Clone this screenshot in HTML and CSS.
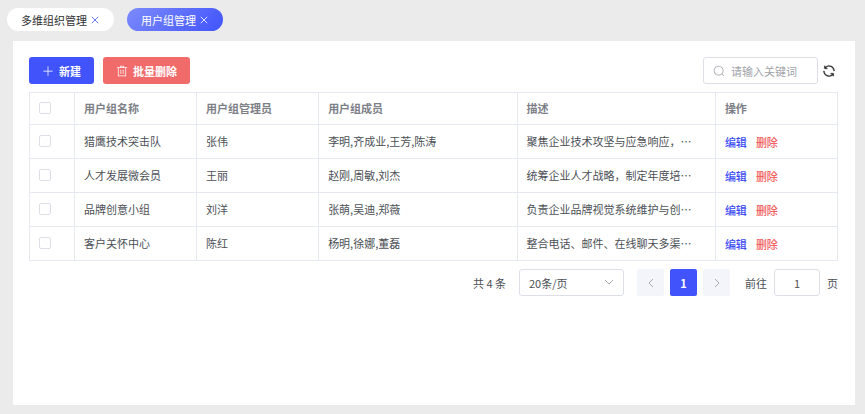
FILE: index.html
```html
<!DOCTYPE html>
<html lang="zh-CN">
<head>
    <meta charset="UTF-8">
    <meta name="viewport" content="width=device-width, initial-scale=1.0">
    <title>用户组管理</title>
    <link rel="stylesheet" href="styles.css">
</head>
<body>
    <!-- Page tabs -->
    <nav class="tabs">
        <div class="tab">
            <a href="#">多维组织管理</a>
            <button type="button" class="tab-close" aria-label="关闭">
                <svg viewBox="0 0 10 10"><path d="M1 1l8 8M9 1l-8 8"/></svg>
            </button>
        </div>
        <div class="tab active">
            <a href="#">用户组管理</a>
            <button type="button" class="tab-close" aria-label="关闭">
                <svg viewBox="0 0 10 10"><path d="M1 1l8 8M9 1l-8 8"/></svg>
            </button>
        </div>
    </nav>

    <main class="panel">
        <!-- Toolbar -->
        <div class="toolbar">
            <button type="button" class="btn btn-primary">
                <svg class="icon" viewBox="0 0 1024 1024"><path d="M480 480V128a32 32 0 0 1 64 0v352h352a32 32 0 1 1 0 64H544v352a32 32 0 1 1-64 0V544H128a32 32 0 0 1 0-64z"/></svg>
                新建
            </button>
            <button type="button" class="btn btn-danger">
                <svg class="icon" viewBox="0 0 1024 1024"><path d="M160 256H96a32 32 0 0 1 0-64h256V95.936a32 32 0 0 1 32-32h256a32 32 0 0 1 32 32V192h256a32 32 0 1 1 0 64h-64v672a32 32 0 0 1-32 32H192a32 32 0 0 1-32-32zm448-64v-64H416v64zM224 896h576V256H224zm192-128a32 32 0 0 1-32-32V416a32 32 0 0 1 64 0v320a32 32 0 0 1-32 32m192 0a32 32 0 0 1-32-32V416a32 32 0 0 1 64 0v320a32 32 0 0 1-32 32"/></svg>
                批量删除
            </button>
            <label class="search">
                <svg class="icon" viewBox="0 0 1024 1024"><path d="m795.904 750.72 124.992 124.928a32 32 0 0 1-45.248 45.248L750.656 795.904a416 416 0 1 1 45.248-45.248zM480 832a352 352 0 1 0 0-704 352 352 0 0 0 0 704"/></svg>
                <input type="text" placeholder="请输入关键词" aria-label="关键词">
            </label>
            <button type="button" class="refresh" aria-label="刷新">
                <svg class="icon" viewBox="96 96 832 832"><path d="M771.776 794.88A384 384 0 0 1 128 512h64a320 320 0 0 0 555.712 216.448H654.72a32 32 0 1 1 0-64h149.056a32 32 0 0 1 32 32v148.928a32 32 0 1 1-64 0v-50.56zM276.288 295.616h92.992a32 32 0 0 1 0 64H220.16a32 32 0 0 1-32-32V178.56a32 32 0 0 1 64 0v50.56A384 384 0 0 1 896.128 512h-64a320 320 0 0 0-555.776-216.384z"/></svg>
            </button>
        </div>

        <!-- User group table -->
        <table class="group-table">
            <colgroup>
                <col class="col-check">
                <col class="col-name">
                <col class="col-admin">
                <col class="col-members">
                <col class="col-desc">
                <col class="col-action">
            </colgroup>
            <thead>
                <tr>
                    <th><input type="checkbox" aria-label="全选"></th>
                    <th>用户组名称</th>
                    <th>用户组管理员</th>
                    <th>用户组成员</th>
                    <th>描述</th>
                    <th>操作</th>
                </tr>
            </thead>
            <tbody>
                <tr>
                    <td><input type="checkbox" aria-label="猎鹰技术突击队"></td>
                    <td>猎鹰技术突击队</td>
                    <td>张伟</td>
                    <td>李明,齐成业,王芳,陈涛</td>
                    <td>聚焦企业技术攻坚与应急响应，…</td>
                    <td><div class="actions"><a href="#" class="edit">编辑</a><a href="#" class="delete">删除</a></div></td>
                </tr>
                <tr>
                    <td><input type="checkbox" aria-label="人才发展微会员"></td>
                    <td>人才发展微会员</td>
                    <td>王丽</td>
                    <td>赵刚,周敏,刘杰</td>
                    <td>统筹企业人才战略，制定年度培…</td>
                    <td><div class="actions"><a href="#" class="edit">编辑</a><a href="#" class="delete">删除</a></div></td>
                </tr>
                <tr>
                    <td><input type="checkbox" aria-label="品牌创意小组"></td>
                    <td>品牌创意小组</td>
                    <td>刘洋</td>
                    <td>张萌,吴迪,郑薇</td>
                    <td>负责企业品牌视觉系统维护与创…</td>
                    <td><div class="actions"><a href="#" class="edit">编辑</a><a href="#" class="delete">删除</a></div></td>
                </tr>
                <tr>
                    <td><input type="checkbox" aria-label="客户关怀中心"></td>
                    <td>客户关怀中心</td>
                    <td>陈红</td>
                    <td>杨明,徐娜,董磊</td>
                    <td>整合电话、邮件、在线聊天多渠…</td>
                    <td><div class="actions"><a href="#" class="edit">编辑</a><a href="#" class="delete">删除</a></div></td>
                </tr>
            </tbody>
        </table>

        <!-- Pagination -->
        <div class="pagination">
            <span class="total">共 4 条</span>
            <div class="page-size">
                <select aria-label="每页条数">
                    <option>20条/页</option>
                </select>
                <svg class="arrow" viewBox="0 0 12 12"><path d="M2 4l4 4 4-4"/></svg>
            </div>
            <div class="pager">
                <button type="button" class="page-btn" aria-label="上一页" disabled>
                    <svg class="arrow" viewBox="0 0 12 12"><path d="M8 2L4 6l4 4"/></svg>
                </button>
                <button type="button" class="page-btn current">1</button>
                <button type="button" class="page-btn" aria-label="下一页" disabled>
                    <svg class="arrow" viewBox="0 0 12 12"><path d="M4 2l4 4-4 4"/></svg>
                </button>
            </div>
            <label class="jumper">前往<input type="text" value="1">页</label>
        </div>
    </main>
</body>
</html>
```

FILE: styles.css
```css
* {
    margin: 0;
    padding: 0;
    box-sizing: border-box;
}

body {
    display: flex;
    flex-direction: column;
    min-height: 100vh;
    padding: 8px 10px 9px 7px;
    background-color: #ebebeb;
    color: #4c4f55;
    font-family: "Noto Sans CJK SC", sans-serif;
    font-size: 11px;
    line-height: 16px;
}

button, input, select {
    font: inherit;
    color: inherit;
}

button {
    border: none;
    background: none;
    cursor: pointer;
}

a {
    color: inherit;
    text-decoration: none;
}

.icon {
    width: 12px;
    height: 12px;
    fill: currentColor;
}

/* Tabs */
.tabs {
    display: flex;
    gap: 13px;
    margin-bottom: 10px;
}

.tab {
    display: flex;
    align-items: center;
    gap: 4px;
    height: 23px;
    padding: 0 15px 0 14px;
    border-radius: 12px;
    background-color: white;
    color: #303133;
}

.tab.active {
    background: linear-gradient(135deg, #7c8bfb, #4154fb);
    color: white;
}

.tab-close {
    display: flex;
    color: #4456e8;
}

.tab.active .tab-close {
    color: white;
}

.tab-close svg {
    width: 8px;
    height: 8px;
    fill: none;
    stroke: currentColor;
}

/* Panel */
.panel {
    flex: 1;
    margin-left: 6px;
    padding: 16px 17px 16px 16px;
    background-color: white;
}

/* Toolbar */
.toolbar {
    display: flex;
    align-items: center;
    margin-bottom: 8px;
}

.btn {
    display: flex;
    align-items: center;
    gap: 5px;
    height: 27px;
    padding: 0 13px;
    border-radius: 3px;
    color: white;
    font-weight: 700;
}

.btn-primary {
    background-color: #4154fb;
}

.btn-danger {
    margin-left: 9px;
    background-color: #f26b6b;
}

.search {
    display: flex;
    align-items: center;
    gap: 6px;
    width: 115px;
    height: 27px;
    margin-left: auto;
    padding: 0 9px;
    border: 1px solid #dcdfe6;
    border-radius: 3px;
    color: #a0a3aa;
}

.search .icon {
    flex-shrink: 0;
}

.search input {
    width: 100%;
    min-width: 0;
    border: none;
    outline: none;
}

.search input::placeholder {
    color: #a0a3aa;
}

.refresh {
    display: flex;
    margin-left: 5px;
    margin-right: 3px;
    color: #222;
}

.refresh .icon {
    stroke: currentColor;
    stroke-width: 24;
}

/* Table */
.group-table {
    width: 100%;
    table-layout: fixed;
    border-collapse: collapse;
}

.col-check {
    width: 45px;
}

.col-name,
.col-admin,
.col-action {
    width: 16%;
}

.col-members,
.col-desc {
    width: 26%;
}

.group-table th,
.group-table td {
    height: 34px;
    padding: 0 9px 2px;
    border: 1px solid #e6e9f2;
    text-align: left;
    white-space: nowrap;
    overflow: hidden;
    text-overflow: ellipsis;
}

.group-table th {
    height: 32px;
    color: #7d8087;
    font-weight: 700;
}

.group-table input {
    display: block;
    width: 12px;
    height: 12px;
    appearance: none;
    border: 1px solid #dcdfe6;
    border-radius: 2px;
    background-color: white;
}

.group-table input:checked {
    border-color: #4154fb;
    background-color: #4154fb;
}

.actions {
    display: flex;
    gap: 9px;
    padding-top: 2px;
    font-weight: 500;
}

.edit {
    color: #3a4af5;
}

.delete {
    color: #f26060;
}

/* Pagination */
.pagination {
    display: flex;
    align-items: center;
    justify-content: flex-end;
    margin-top: 8px;
}

.arrow {
    width: 12px;
    height: 12px;
    fill: none;
    stroke: #a8abb2;
}

.page-size {
    position: relative;
    width: 105px;
    margin: 0 13px;
}

.page-size select {
    width: 100%;
    height: 27px;
    padding: 0 9px;
    appearance: none;
    border: 1px solid #dcdfe6;
    border-radius: 3px;
    background-color: white;
}

.page-size .arrow {
    position: absolute;
    top: 7px;
    right: 9px;
    pointer-events: none;
}

.pager {
    display: flex;
    gap: 6px;
}

.page-btn {
    display: flex;
    align-items: center;
    justify-content: center;
    width: 27px;
    height: 27px;
    border-radius: 2px;
    background-color: #f4f5fa;
}

.page-btn.current {
    background-color: #4154fb;
    color: white;
    font-weight: 700;
}

.jumper {
    display: flex;
    align-items: center;
    gap: 7px;
    margin-left: 15px;
}

.jumper input {
    width: 46px;
    height: 27px;
    border: 1px solid #dcdfe6;
    border-radius: 3px;
    text-align: center;
}
```
